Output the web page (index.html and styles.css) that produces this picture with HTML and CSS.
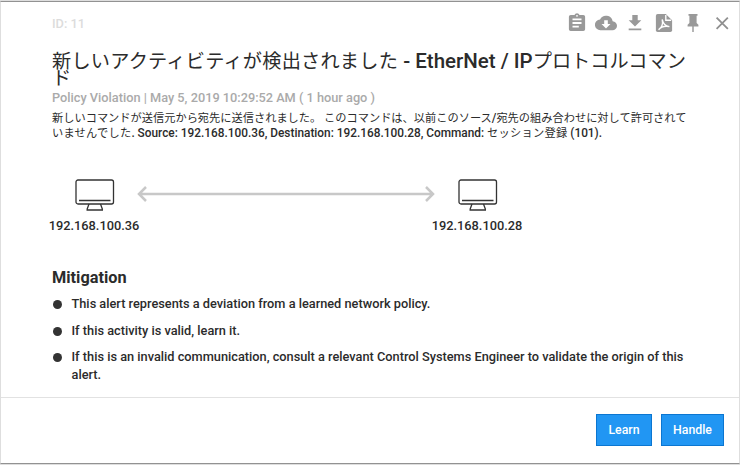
FILE: index.html
```html
<!DOCTYPE html>
<html lang="ja">
<head>
<meta charset="utf-8">
<title>Alert</title>
<link rel="stylesheet" href="styles.css">
</head>
<body>
<main class="dialog">
  <header class="top">
    <span class="alert-id">ID: 11</span>
    <nav class="tools">
      <svg width="24" height="24" viewBox="0 0 24 24"><path d="M19 3h-4.2a3 3 0 0 0-5.6 0H5a2 2 0 0 0-2 2v14a2 2 0 0 0 2 2h14a2 2 0 0 0 2-2V5a2 2 0 0 0-2-2zm-7 0a1 1 0 1 1 0 2 1 1 0 0 1 0-2zm2 14H7v-2h7zm3-4H7v-2h10zm0-4H7V7h10z"/></svg>
      <svg width="24" height="24" viewBox="0 0 24 24"><path d="M19.4 10A7.5 7.5 0 0 0 5.4 8 6 6 0 0 0 6 20h13a5 5 0 0 0 .4-10zM17 13l-5 5-5-5h3V9h4v4z"/></svg>
      <svg width="24" height="24" viewBox="0 0 24 24"><path d="M19 9h-4V3H9v6H5l7 7zM5 18v2h14v-2z"/></svg>
      <svg width="24" height="24" viewBox="0 0 24 24"><path d="M14 2H5a2 2 0 0 0-2 2v16a2 2 0 0 0 2 2h14a2 2 0 0 0 2-2V9z"/><path class="cut" d="M14 3v6h6"/><path class="cut" d="M10 8c1 5 3 7.5 8 8-5-1-9 0-12 3.5C10 17 11 13 10 8z"/></svg>
      <svg width="24" height="24" viewBox="0 0 24 24"><path d="M16 12V4h1V2H7v2h1v8l-2 2v2h5.2v6h1.600v-6H18v-2z"/></svg>
      <svg width="24" height="24" viewBox="0 0 24 24"><path class="close" d="M6 6l12.500 12.500M18.500 6L6 18.500"/></svg>
    </nav>
  </header>
  <section class="content">
    <h1 class="title"><span class="jp lead">新しいアクティビティが検出されました</span> - EtherNet / IP<span class="jp">プロトコルコマン<br>ド</span></h1>
    <p class="meta">Policy Violation | May 5, 2019 10:29:52 AM ( 1 hour ago )</p>
    <p class="desc"><span class="jp">新しいコマンドが送信元から宛先に送信されました。 このコマンドは、以前このソース</span>/<span class="jp">宛先の組み合わせに対して許可されて</span><br><span class="jp wide">いませんでした</span>. Source: 192.168.100.36, Destination: 192.168.100.28, Command: <span class="jp wide">セッション登録</span> (101).</p>
    <div class="flow">
      <div class="node">
        <svg class="monitor" width="40" height="33" viewBox="0 0 40 33"><rect x="1" y="1" width="37.5" height="24" rx="2"/><path d="M4 21.5h31.5M14 25l-2 5.5M25.5 25l2 5.5M11.5 31h16.5"/></svg>
        <span>192.168.100.36</span>
      </div>
      <svg class="arrow" width="301" height="18" viewBox="0 0 301 18"><path d="M3 9h294M10 2L3 9l7 7M290 2l7 7-7 7"/></svg>
      <div class="node">
        <svg class="monitor" width="40" height="33" viewBox="0 0 40 33"><rect x="1" y="1" width="37.5" height="24" rx="2"/><path d="M4 21.5h31.5M14 25l-2 5.5M25.5 25l2 5.5M11.5 31h16.5"/></svg>
        <span>192.168.100.28</span>
      </div>
    </div>
    <h2 class="subtitle">Mitigation</h2>
    <ul class="steps">
      <li>This alert represents a deviation from a learned network policy.</li>
      <li>If this activity is valid, learn it.</li>
      <li>If this is an invalid communication, consult a relevant Control Systems Engineer to validate the origin of this<br>alert.</li>
    </ul>
  </section>
  <footer class="actions">
    <button class="btn">Learn</button>
    <button class="btn handle">Handle</button>
  </footer>
</main>
</body>
</html>
```
FILE: styles.css
```css
* { box-sizing: border-box; }
body {
  display: flow-root;
  margin: 0;
  background: #dedede;
  color: #2b2b2b;
  font-family: Roboto, "Noto Sans CJK JP", sans-serif;
  font-weight: 500;
}
h1, h2, p, ul { margin: 0; padding: 0; }
.dialog {
  height: 463px;
  margin: 1px 0;
  display: flex;
  flex-direction: column;
  background: #fff;
  border: 1px solid #dedede;
  border-top-color: #929292;
  border-bottom-color: #929292;
}
.top {
  height: 42px;
  padding: 0 5px 0 51px;
  display: flex;
  justify-content: space-between;
  align-items: center;
}
.alert-id { font-size: 12.8px; color: #dcdcdc; }
.tools { display: flex; gap: 5px; }
.tools svg { fill: #999; padding: 1.2px; }
.tools .cut { fill: none; stroke: #fff; stroke-width: 1.5; }
.tools .close { fill: none; stroke: #909090; stroke-width: 2; }
.content { flex: 1; padding: 0 51px; white-space: nowrap; }
.jp { font-weight: 400; }
.title {
  margin-top: 9px;
  height: 36px;
  font-size: 20.5px;
  line-height: 17px;
  font-weight: 500;
}
.title .jp { font-size: 19.2px; }
.title .lead { letter-spacing: 0.22px; }
.meta { font-size: 12.75px; line-height: 18px; color: #aaa; }
.desc { margin-top: 4px; font-size: 11.85px; line-height: 14px; }
.desc .jp { font-size: 11.22px; }
.desc .wide { letter-spacing: 0.25px; }
.flow { display: flex; margin: 38px 0 0 -5px; }
.node {
  width: 96px;
  display: flex;
  flex-direction: column;
  align-items: center;
  font-size: 12.8px;
  line-height: 16px;
  gap: 6px;
}
.node span { margin-right: 2px; }
.monitor { fill: none; stroke: #333; stroke-width: 1.3; }
.arrow { margin: 6px -7px 0 -7px; width: 301px; fill: none; stroke: #c8c8c8; stroke-width: 2.5; }
.subtitle { margin-top: 34px; font-size: 16.3px; line-height: 20px; font-weight: 700; }
.steps { margin-top: 7px; list-style: none; font-size: 12.77px; line-height: 18px; }
.steps li { display: flex; margin-bottom: 8.5px; }
.steps li::before {
  content: "";
  flex: none;
  width: 9px;
  height: 9px;
  margin: 5px 9.5px 0 1px;
  border-radius: 50%;
  background: #333;
}
.actions {
  height: 66px;
  padding: 16px 15px 0 0;
  display: flex;
  justify-content: flex-end;
  gap: 9px;
  border-top: 1px solid #e2e2e2;
}
.btn {
  width: 56px;
  height: 32px;
  padding: 0;
  border: 1px solid #0b76d1;
  background: #2196f3;
  color: #fff;
  font: 500 12.3px Roboto, sans-serif;
}
.handle { width: 63px; }
```
